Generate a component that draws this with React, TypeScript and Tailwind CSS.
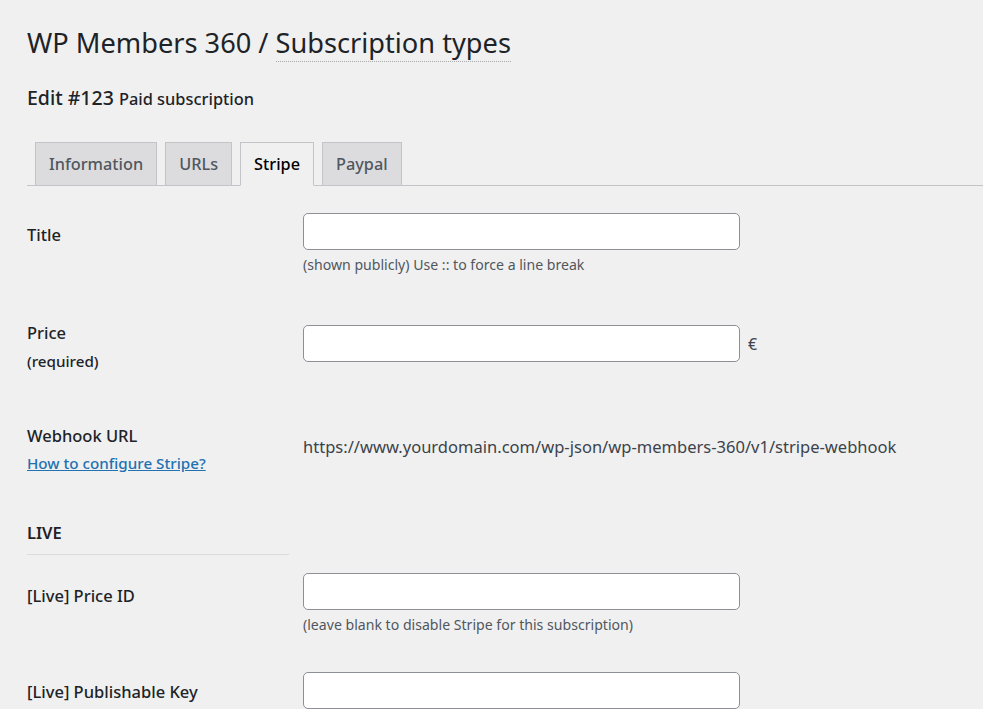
import { useState } from 'react'

const tabs = ['Information', 'URLs', 'Stripe', 'Paypal']

function TextInput() {
  return (
    <input
      type="text"
      className="block h-[37px] w-[437px] rounded-[5px] border border-[#8c8f94] bg-white px-2 text-[16px] text-[#2c3338] outline-none"
    />
  )
}

export default function App() {
  const [active, setActive] = useState('Stripe')

  return (
    <div
      className="min-h-screen bg-[#f0f0f1] pl-[27px] pt-[25px] text-[#1d2327]"
      style={{ fontFamily: '"Segoe UI", "Noto Sans", sans-serif' }}
    >
      {/* Page title */}
      <h1 className="text-[27.2px] leading-[36px] font-normal">
        WP Members 360 /{' '}
        <span className="border-b border-dotted border-[#a7aaad]">Subscription types</span>
      </h1>

      <h2 className="mt-[23px] text-[19.5px] leading-[28px] font-medium">
        Edit #123 <span className="text-[16.4px]">Paid subscription</span>
      </h2>

      {/* Tabs */}
      <div className="mt-[29px] flex border-b border-[#c3c4c7] pl-[8px]">
        {tabs.map((tab) => {
          const isActive = tab === active
          return (
            <button
              key={tab}
              onClick={() => setActive(tab)}
              className={
                isActive
                  ? 'mr-[8px] -mb-px h-[44px] border border-[#c3c4c7] border-b-[#f0f0f1] bg-[#f0f0f1] px-[13px] text-[16.3px] font-medium text-black'
                  : 'mr-[8px] -mb-px h-[44px] border border-[#c3c4c7] bg-[#dcdcde] px-[13px] text-[16.3px] font-medium text-[#50575e]'
              }
            >
              {tab}
            </button>
          )
        })}
      </div>

      {/* Form */}
      <div className="pt-[27px]">
        <div className="flex items-start">
          <div className="mt-[11px] w-[276px] text-[16.5px] leading-[22px] font-medium">Title</div>
          <div>
            <TextInput />
            <p className="mt-[5px] text-[14.1px] leading-[20px] text-[#50575e]">
              (shown publicly) Use :: to force a line break
            </p>
          </div>
        </div>

        <div className="mt-[47px] flex items-start">
          <div className="w-[276px]">
            <div className="text-[16.5px] leading-[22px] font-medium">Price</div>
            <div className="mt-[7px] text-[15.2px] leading-[20px] font-medium">(required)</div>
          </div>
          <div className="mt-[3px] flex items-center">
            <TextInput />
            <span className="ml-[8px] text-[16px] text-[#3c434a]">€</span>
          </div>
        </div>

        <div className="mt-[54px] flex items-start">
          <div className="w-[276px]">
            <div className="text-[16.5px] leading-[22px] font-medium">Webhook URL</div>
            <a href="#" className="mt-[6px] block text-[15.2px] leading-[20px] font-medium text-[#2271b1] underline">
              How to configure Stripe?
            </a>
          </div>
          <div className="mt-[11px] text-[16.55px] leading-[22px] text-[#3c434a]">
            https://www.yourdomain.com/wp-json/wp-members-360/v1/stripe-webhook
          </div>
        </div>

        <div className="mt-[49px] w-[262px] border-b border-[#dcdcde] pb-[10px] text-[16.5px] leading-[22px] font-semibold">
          LIVE
        </div>

        <div className="mt-[18px] flex items-start">
          <div className="mt-[12px] w-[276px] text-[16.5px] leading-[22px] font-medium">[Live] Price ID</div>
          <div>
            <TextInput />
            <p className="mt-[5px] text-[14.1px] leading-[20px] text-[#50575e]">
              (leave blank to disable Stripe for this subscription)
            </p>
          </div>
        </div>

        <div className="mt-[37px] flex items-start">
          <div className="mt-[9px] w-[276px] text-[16.5px] leading-[22px] font-medium">[Live] Publishable Key</div>
          <TextInput />
        </div>
      </div>
    </div>
  )
}
